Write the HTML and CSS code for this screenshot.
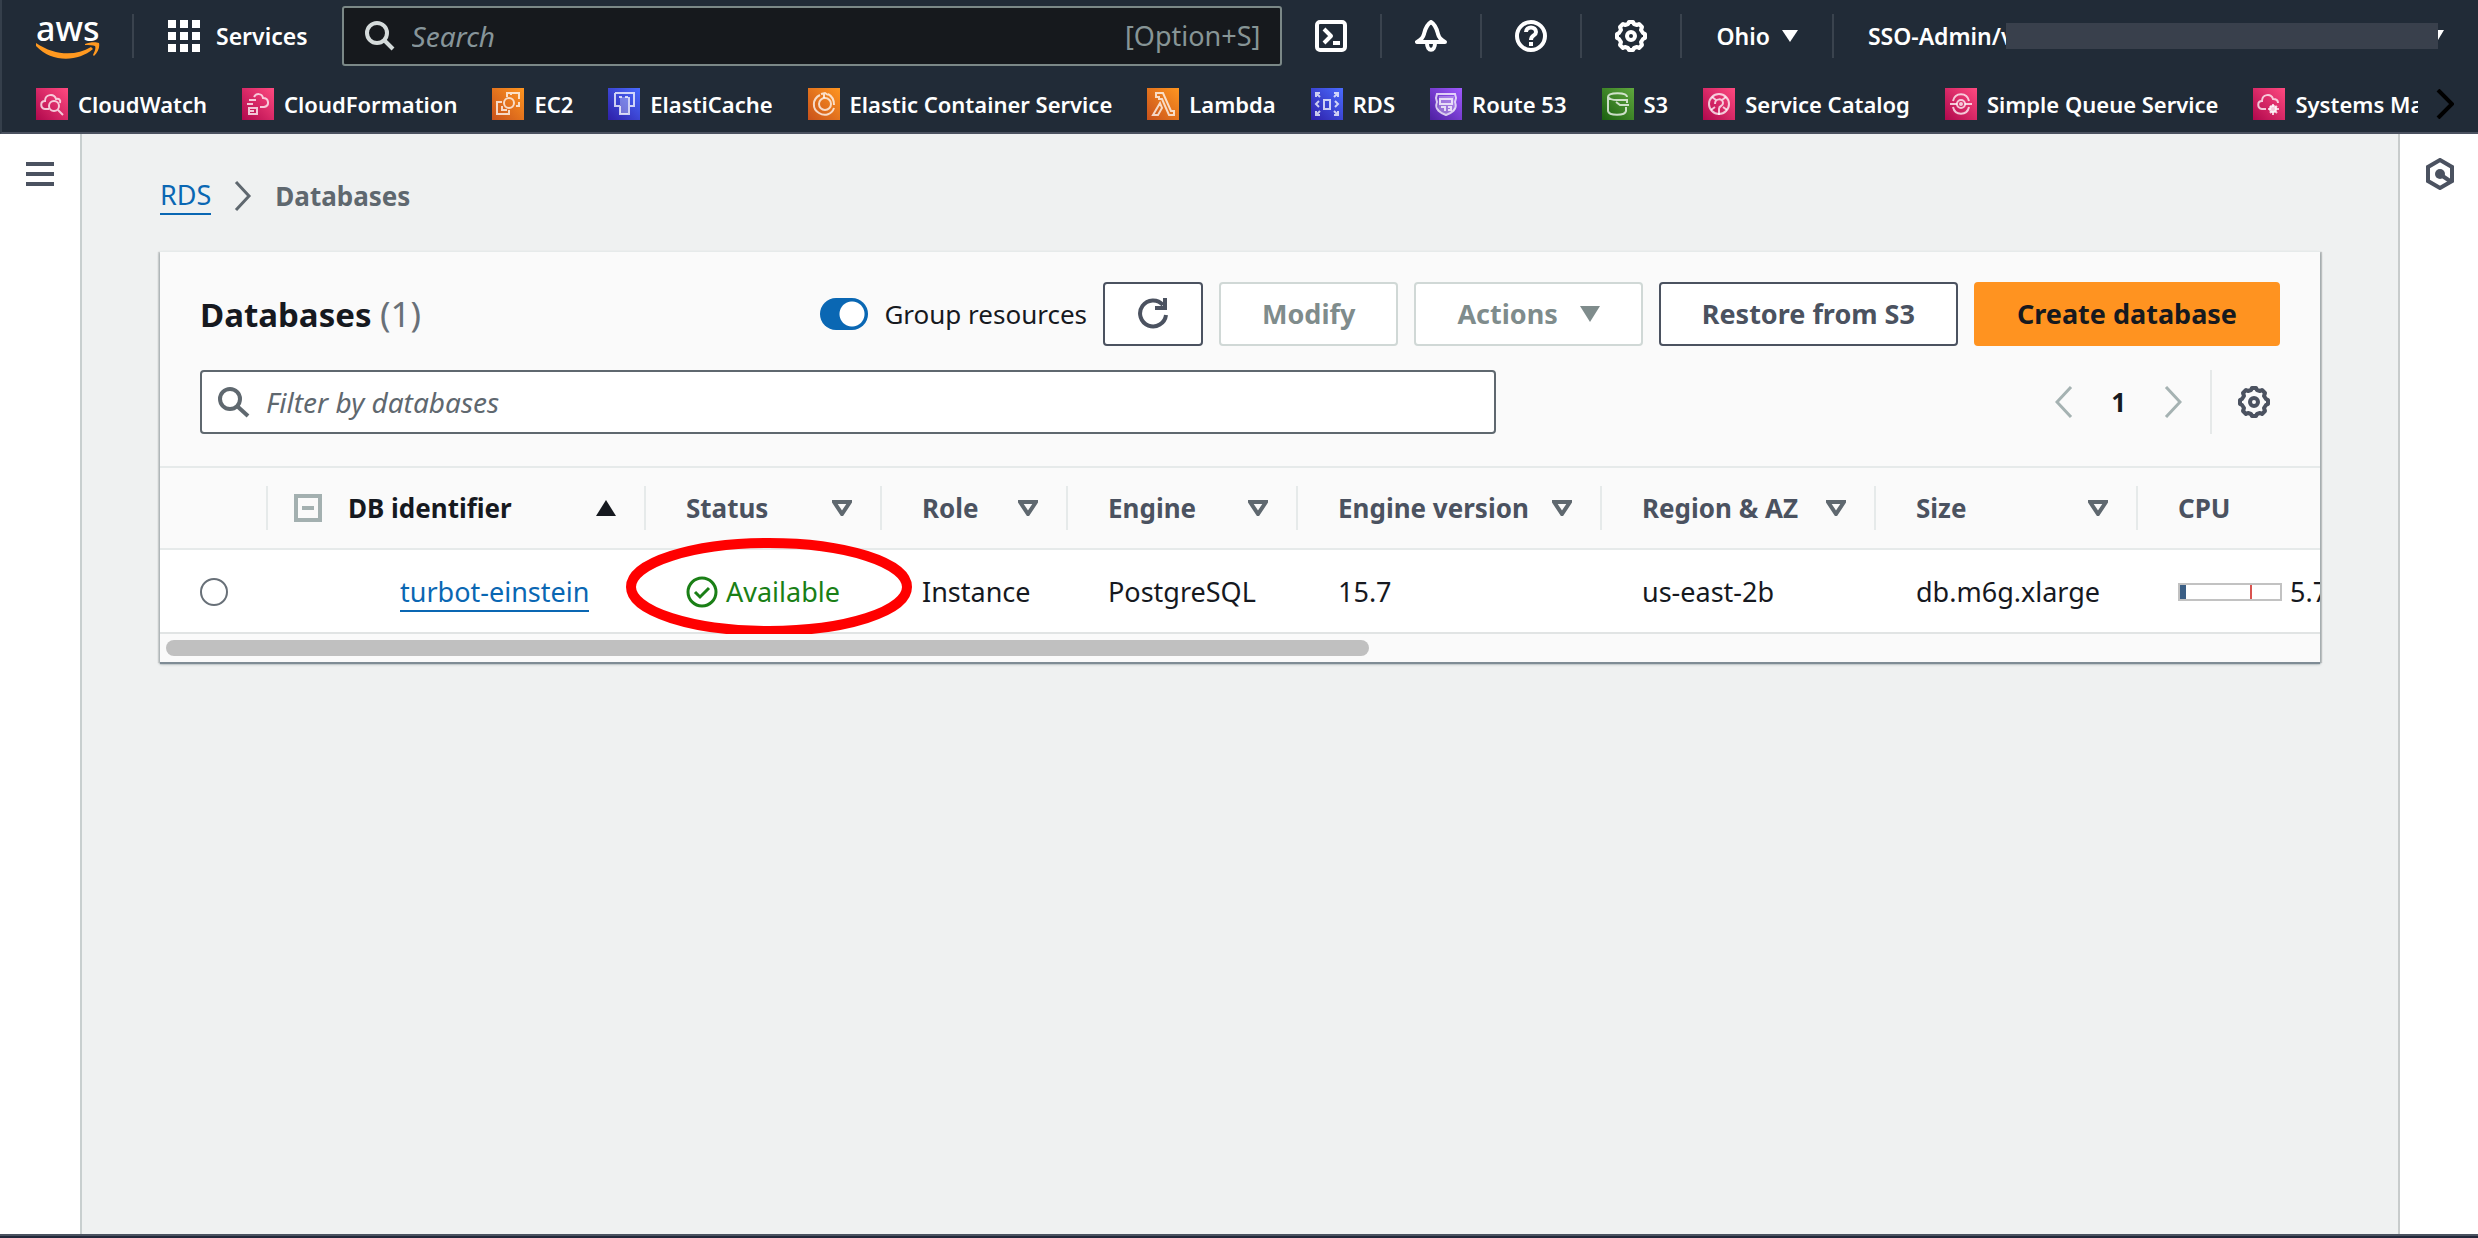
FILE: index.html
```html
<!DOCTYPE html>
<html lang="en">
<head>
<meta charset="utf-8">
<meta name="viewport" content="width=device-width, initial-scale=1">
<title>RDS Databases</title>
<link rel="stylesheet" href="styles.css">
</head>
<body>
<header class="topnav">
  <div class="topnav-main">
    <a class="logo" href="#" aria-label="AWS home">
      <span class="logo-word">aws</span>
      <svg class="logo-smile" viewBox="0 0 64 18" aria-hidden="true"><path d="M0 1c19 13 40 13 55 4l2 2C42 20 16 21 0 4zM49 2c5-2 11-2 14-1 1 4-1 9-5 13l-1-1c2-4 3-7 2-9-2-1-6-1-10-1z"/></svg>
    </a>
    <button class="nav-item services" type="button">
      <svg class="icon" viewBox="0 0 32 32" aria-hidden="true"><path fill="currentColor" d="M0 0h8v8H0zM12 0h8v8h-8zM24 0h8v8h-8zM0 12h8v8H0zM12 12h8v8h-8zM24 12h8v8h-8zM0 24h8v8H0zM12 24h8v8h-8zM24 24h8v8h-8z"/></svg>
      <span>Services</span>
    </button>
    <label class="search">
      <svg class="icon search-icon" viewBox="0 0 32 32" aria-hidden="true"><circle cx="13" cy="13" r="10"/><path d="M20 20l9 9"/></svg>
      <input type="search" placeholder="Search" aria-label="Search">
      <span class="search-hint">[Option+S]</span>
    </label>
    <div class="utilities">
      <button class="nav-item" type="button" aria-label="CloudShell"><svg class="icon line" viewBox="0 0 32 32"><rect x="2" y="2" width="28" height="28" rx="3"/><path d="M9 9l7 7-7 7"/><path d="M18 23h7"/></svg></button>
      <button class="nav-item" type="button" aria-label="Notifications"><svg class="icon line" viewBox="0 0 32 32"><path d="M16 2c-5 3-6 8-7 12-1 4-3 6-7 8h28c-4-2-6-4-7-8-1-4-2-9-7-12z"/><path d="M12 23c0 9 8 9 8 0"/></svg></button>
      <button class="nav-item" type="button" aria-label="Support"><svg class="icon line" viewBox="0 0 32 32"><circle cx="16" cy="16" r="14"/><path d="M11 12c0-6 10-6 10 0 0 4-5 3-5 8M16 22v4"/></svg></button>
      <button class="nav-item" type="button" aria-label="Settings"><svg class="icon line" viewBox="0 0 32 32"><path d="M13 4l1-2h4l1 2 3 1 2-1 3 3-1 3 2 3 2 1v4l-2 1-2 3 1 3-3 3-2-1-3 1-1 2h-4l-1-2-3-1-2 1-3-3 1-3-2-3-2-1v-4l2-1 2-3-1-3 3-3 2 1z"/><circle cx="16" cy="16" r="4"/></svg></button>
      <button class="nav-item region" type="button"><span>Ohio</span><svg class="caret" viewBox="0 0 16 12" aria-hidden="true"><path d="M0 0h16L8 12z"/></svg></button>
      <button class="nav-item account" type="button"><span>SSO-Admin/v</span><span class="redacted"></span><svg class="caret-tip" viewBox="0 0 6 12" aria-hidden="true"><path d="M0 0h6L0 10z"/></svg></button>
    </div>
  </div>
  <nav class="favorites" aria-label="Favorites">
    <ul class="favorites-list">
      <li><a href="#"><svg class="svc pink" viewBox="0 0 32 32"><path d="M13 21H9c-5-1-5-8 0-8 0-7 9-8 11-2 3-1 5 1 4 4"/><circle cx="18" cy="18" r="5"/><path d="M22 22l5 5"/></svg>CloudWatch</a></li>
      <li><a href="#"><svg class="svc pink" viewBox="0 0 32 32"><path d="M12 9c2-4 8-4 9 1 6 0 7 8 1 9h-4M7 12h7M5 16h6M7 20h8v6H7zM7 23h5"/></svg>CloudFormation</a></li>
      <li><a href="#"><svg class="svc orange" viewBox="0 0 32 32"><circle cx="17" cy="15" r="5"/><path d="M15 9V5h12v6M24 18h3v-4M10 14H5v12h12v-4M10 18v4h5M19 5v2"/></svg>EC2</a></li>
      <li><a href="#"><svg class="svc blue" viewBox="0 0 32 32"><path class="tint" d="M12 9h8v17h-8z"/><path d="M7 5h19v4M7 5v13h5M26 9v9h-5M12 18v8h9V9M11 9h3M17 9h3"/></svg>ElastiCache</a></li>
      <li><a href="#"><svg class="svc orange" viewBox="0 0 32 32"><circle cx="17" cy="16" r="6"/><path d="M12 7c-8 4-8 14-1 18 6 4 13 1 15-5M13 6l4-1 3 2M20 6c4 2 6 6 6 11M16 5v5"/></svg>Elastic Container Service</a></li>
      <li><a href="#"><svg class="svc orange" viewBox="0 0 32 32"><path d="M9 5h7l8 18h3v4h-5l-7-16h-3V9H9zM13 15l2 5-4 7H6z"/></svg>Lambda</a></li>
      <li><a href="#"><svg class="svc blue" viewBox="0 0 32 32"><path d="M5 9V5h4M5 5l4 4M27 9V5h-4M27 5l-4 4M5 23v4h4M5 27l4-4M27 23v4h-4M27 27l-4-4M13 12h6v9h-6zM8 13l-3 3 3 3M24 13l3 3-3 3M15 11v2"/></svg>RDS</a></li>
      <li><a href="#"><svg class="svc purple" viewBox="0 0 32 32"><path class="tint" d="M9 8h15l1 14-9 4-8-4z"/><path d="M7 6h18l1 4-1 4c3 8-4 11-9 13-5-2-12-5-9-13l-1-4zM10 11h12v5H10zM11 19h4v4M18 19h3v3h-3"/></svg>Route 53</a></li>
      <li><a href="#"><svg class="svc green" viewBox="0 0 32 32"><path d="M6 9c0-5 19-5 19 0M6 9v14c1 5 17 5 18 0v-4M6 9c2 3 6 3 9 3h10v3M14 14l4 3h9"/></svg>S3</a></li>
      <li><a href="#"><svg class="svc pink" viewBox="0 0 32 32"><circle cx="16" cy="16" r="10"/><path d="M12 16c0-6 8-6 8-1 0 4-4 2-4 6v6M9 9l4 3M23 9l-4 3M8 22l4-3M24 22l-4-3"/></svg>Service Catalog</a></li>
      <li><a href="#"><svg class="svc pink" viewBox="0 0 32 32"><path d="M8 13c2-9 14-9 16 0M8 19c2 9 14 9 16 0M5 16h7M20 16h7"/><circle cx="16" cy="16" r="4"/><circle cx="16" cy="16" r="1"/></svg>Simple Queue Service</a></li>
      <li><a href="#"><svg class="svc pink" viewBox="0 0 32 32"><path d="M13 21H9c-5-1-5-8 0-8 0-7 9-8 11-2 4 0 5 2 5 4M20 16v11M15 21h11M17 18l7 7M24 18l-7 7"/><circle cx="20" cy="21" r="3"/></svg>Systems Manager</a></li>
    </ul>
    <button class="favorites-next" type="button" aria-label="Next"><svg viewBox="0 0 18 30"><path d="M2 1l14 14L2 29"/></svg></button>
  </nav>
</header>

<div class="shell">
  <aside class="rail rail-left">
    <button type="button" aria-label="Open navigation"><svg class="burger" viewBox="0 0 28 24"><path d="M0 0h28v4H0zM0 10h28v4H0zM0 20h28v4H0z"/></svg></button>
  </aside>
  <main class="content">
    <nav class="breadcrumb" aria-label="Breadcrumb">
      <a class="link" href="#">RDS</a>
      <svg viewBox="0 0 18 32" aria-hidden="true"><path d="M2 2l13 14L2 30"/></svg>
      <span>Databases</span>
    </nav>
    <section class="card">
      <div class="card-head">
        <div class="title-row">
          <h1>Databases <span>(1)</span></h1>
          <div class="actions">
            <label class="switch"><input type="checkbox" checked>Group resources</label>
            <button class="btn btn-icon" type="button" aria-label="Refresh"><svg class="icon" viewBox="0 0 32 32"><path class="stroke" d="M26 7a13 13 0 1 0 3 10"/><path d="M30 0v12H18V8h8V0z"/></svg></button>
            <button class="btn" type="button" disabled>Modify</button>
            <button class="btn" type="button" disabled>Actions<svg class="btn-caret" viewBox="0 0 20 16" aria-hidden="true"><path d="M0 0h20L10 16z"/></svg></button>
            <button class="btn" type="button">Restore from S3</button>
            <button class="btn btn-primary" type="button">Create database</button>
          </div>
        </div>
        <div class="filter-row">
          <label class="filter">
            <svg class="icon" viewBox="0 0 32 32" aria-hidden="true"><circle cx="12" cy="13" r="10"/><path d="M19 20l11 10"/></svg>
            <input type="search" placeholder="Filter by databases" aria-label="Filter by databases">
          </label>
          <div class="pager">
            <button type="button" aria-label="Previous page" disabled><svg class="chev" viewBox="0 0 18 32"><path d="M16 1L2 16l14 15"/></svg></button>
            <span class="page">1</span>
            <button type="button" aria-label="Next page" disabled><svg class="chev" viewBox="0 0 18 32"><path d="M2 1l14 15L2 31"/></svg></button>
            <button class="prefs" type="button" aria-label="Preferences"><svg class="icon line" viewBox="0 0 32 32"><path d="M13 4l1-2h4l1 2 3 1 2-1 3 3-1 3 2 3 2 1v4l-2 1-2 3 1 3-3 3-2-1-3 1-1 2h-4l-1-2-3-1-2 1-3-3 1-3-2-3-2-1v-4l2-1 2-3-1-3 3-3 2 1z"/><circle cx="16" cy="16" r="4"/></svg></button>
          </div>
        </div>
      </div>
      <div class="table-wrap">
        <table>
          <colgroup><col class="c-select"><col class="c-id"><col class="c-status"><col class="c-role"><col class="c-engine"><col class="c-version"><col class="c-region"><col class="c-size"><col></colgroup>
          <thead>
            <tr>
              <th scope="col" aria-label="Select"><div class="th"></div></th>
              <th scope="col" class="sorted"><div class="th th-id"><svg class="collapse" viewBox="0 0 28 28" aria-hidden="true"><path d="M2 2h24v24H2zM8 14h12"/></svg>DB identifier<svg class="sort" viewBox="0 0 20 16" aria-hidden="true"><path d="M10 0l10 16H0z"/></svg></div></th>
              <th scope="col"><div class="th">Status<svg class="sort open" viewBox="0 0 20 16" aria-hidden="true"><path d="M2 2h16l-8 12z"/></svg></div></th>
              <th scope="col"><div class="th">Role<svg class="sort open" viewBox="0 0 20 16" aria-hidden="true"><path d="M2 2h16l-8 12z"/></svg></div></th>
              <th scope="col"><div class="th">Engine<svg class="sort open" viewBox="0 0 20 16" aria-hidden="true"><path d="M2 2h16l-8 12z"/></svg></div></th>
              <th scope="col"><div class="th">Engine version<svg class="sort open" viewBox="0 0 20 16" aria-hidden="true"><path d="M2 2h16l-8 12z"/></svg></div></th>
              <th scope="col"><div class="th">Region &amp; AZ<svg class="sort open" viewBox="0 0 20 16" aria-hidden="true"><path d="M2 2h16l-8 12z"/></svg></div></th>
              <th scope="col"><div class="th">Size<svg class="sort open" viewBox="0 0 20 16" aria-hidden="true"><path d="M2 2h16l-8 12z"/></svg></div></th>
              <th scope="col"><div class="th th-last">CPU</div></th>
            </tr>
          </thead>
          <tbody>
            <tr>
              <td class="select"><input type="radio" name="db" aria-label="Select turbot-einstein"></td>
              <td class="identifier"><a class="link" href="#">turbot-einstein</a></td>
              <td class="status">
                <span class="ok"><svg class="icon" viewBox="0 0 32 32" aria-hidden="true"><circle cx="16" cy="16" r="14"/><path d="M9 16l5 5 9-9"/></svg>Available</span>
                <svg class="highlight" viewBox="0 0 286 96" aria-hidden="true"><ellipse cx="143" cy="49" rx="138" ry="44"/></svg>
              </td>
              <td>Instance</td>
              <td>PostgreSQL</td>
              <td>15.7</td>
              <td>us-east-2b</td>
              <td>db.m6g.xlarge</td>
              <td><div class="cpu"><span class="meter"><span class="meter-fill" style="width: 6%"></span><span class="meter-mark"></span></span>5.7</div></td>
            </tr>
          </tbody>
        </table>
      </div>
      <div class="scrollbar"><div class="thumb"></div></div>
    </section>
  </main>
  <aside class="rail rail-right">
    <button type="button" aria-label="Open tools"><svg class="hex" viewBox="0 0 28 32"><path class="stroke" d="M14 2l12 7v14l-12 7-12-7V9z"/><circle cx="14" cy="16" r="5"/><path class="stroke" d="M15 17l9 6"/></svg></button>
  </aside>
</div>
<footer class="footer"></footer>
</body>
</html>
```
FILE: styles.css
```css
* { box-sizing: border-box; }

body {
  margin: 0;
  height: 100vh;
  display: flex;
  flex-direction: column;
  overflow: hidden;
  background: #eff1f1;
  color: #16191f;
  font: 27px/40px "Noto Sans", sans-serif;
}

button {
  margin: 0;
  padding: 0;
  border: 0;
  background: none;
  color: inherit;
  font: inherit;
}

input { font: inherit; color: inherit; }
svg { display: block; flex: none; fill: none; }
.icon { width: 32px; height: 32px; }
.line { stroke: currentColor; stroke-width: 4; stroke-linejoin: round; }

/* Top navigation */
.topnav {
  flex: none;
  background: #212b37;
  border-bottom: 2px solid #4b5260;
  border-left: 2px solid #353f4b;
  color: #fff;
  font-size: 22px;
  font-weight: 600;
  line-height: 32px;
}

.topnav-main { display: flex; align-items: center; height: 72px; font-size: 23px; }

.logo {
  display: flex;
  flex-direction: column;
  width: 132px;
  height: 44px;
  padding-left: 34px;
  border-right: 2px solid #3a434e;
  color: #fff;
  text-decoration: none;
}

.logo-word { font: 500 34px/28px "Noto Sans", sans-serif; }
.logo-smile { width: 64px; height: 18px; fill: #ff9920; }

.nav-item { display: flex; align-items: center; }
.services { gap: 16px; padding: 0 34px; }

.search {
  display: flex;
  flex: none;
  align-items: center;
  width: 38%;
  height: 60px;
  padding: 0 20px 0 20px;
  background: #16191d;
  border: 2px solid #7b8887;
  border-radius: 3px;
  color: #879596;
  font-size: 27px;
  font-weight: 400;
}

.search-icon { stroke: #d5dbdb; stroke-width: 4; }

.search input {
  flex: 1;
  min-width: 0;
  margin-left: 16px;
  padding: 2px 0 0;
  border: 0;
  outline: 0;
  background: none;
}

.search input::placeholder, .filter input::placeholder {
  color: #87959a;
  font-style: italic;
  font-size: 28px;
  opacity: 1;
}

.utilities { display: flex; align-items: center; flex: 1; }

.utilities .nav-item {
  height: 44px;
  padding: 0 33px;
  border-right: 2px solid #3a434e;
}

.utilities .region { gap: 12px; padding: 0 34px; }
.utilities .account { flex: 1; min-width: 0; padding: 0 34px 0 34px; border: 0; }
.caret { width: 16px; height: 12px; fill: #fff; }
.caret-tip { width: 6px; height: 12px; fill: #fff; }
.redacted { flex: 1; height: 26px; margin-left: -8px; background: #39404c; }

.favorites { display: flex; align-items: center; height: 60px; padding: 4px 24px 0 34px; }

.favorites-list {
  display: flex;
  flex: 1;
  gap: 35px;
  min-width: 0;
  margin: 0;
  padding: 0;
  overflow: hidden;
  list-style: none;
  white-space: nowrap;
}

.favorites-list a {
  display: flex;
  align-items: center;
  gap: 10px;
  color: #fff;
  text-decoration: none;
}

.svc { width: 32px; height: 32px; stroke: #fff; stroke-opacity: 0.75; stroke-width: 2; }
.tint { fill: #fff; fill-opacity: 0.3; stroke: none; }
.pink { background: linear-gradient(45deg, #b0084d, #ff4a80); }
.orange { background: linear-gradient(45deg, #c8511b, #ff9620); }
.blue { background: linear-gradient(45deg, #2e1fa8, #4a6cff); }
.purple { background: linear-gradient(45deg, #4d1fa0, #a05aff); }
.green { background: linear-gradient(45deg, #1b6010, #60a83e); }

.favorites-next { margin-left: 18px; }
.favorites-next svg { width: 18px; height: 30px; stroke: #000; stroke-width: 4; }

/* Page frame */
.shell { display: flex; flex: 1; min-height: 0; }

.rail {
  flex: none;
  display: flex;
  justify-content: center;
  align-items: flex-start;
  width: 82px;
  background: #fff;
  color: #4b5260;
}

.rail-left { padding-top: 28px; border-right: 2px solid #c8cfcf; }
.rail-right { width: 80px; padding: 24px 0 0 2px; border-left: 2px solid #c8cccc; }
.burger { width: 28px; height: 24px; fill: currentColor; }
.hex { width: 28px; height: 32px; fill: currentColor; }
.stroke { fill: none; stroke: currentColor; stroke-width: 4; }

.content { flex: 1; min-width: 0; padding: 42px 78px; }

.breadcrumb {
  display: flex;
  align-items: center;
  gap: 23px;
  height: 40px;
  margin-bottom: 35px;
  color: #5f686f;
  font-size: 26px;
  font-weight: 700;
}

.breadcrumb a { font-weight: 400; font-size: 27px; line-height: 36px; }
.breadcrumb svg { width: 18px; height: 32px; stroke: #5f686f; stroke-width: 3; }
.link { color: #0a67b3; text-decoration: none; border-bottom: 2px solid #0a67b3; }

/* Databases card */
.card {
  background: #fafafa;
  border-top: 1px solid #e6eaea;
  box-shadow: 0 2px 1px #7f8c95, 0 2px 3px rgba(0, 28, 36, 0.3), 2px 1px 1px #c6c9c9, -2px 1px 1px #d3d6d6;
}

.card-head { padding: 30px 40px 32px; border-bottom: 2px solid #e6eaea; }
.title-row { display: flex; align-items: center; justify-content: space-between; height: 64px; }
h1 { margin: 0; font-size: 33px; font-weight: 700; line-height: 44px; }
h1 span { color: #687078; font-weight: 400; font-size: 35px; }
.actions { display: flex; align-items: center; gap: 16px; }

.switch { display: flex; align-items: center; gap: 16px; font-size: 26px; }

.switch input {
  appearance: none;
  width: 48px;
  height: 32px;
  margin: 0;
  border-radius: 16px;
  background: radial-gradient(circle at 32px 16px, #fff 12px, #0a67b3 13px);
}

.btn {
  display: flex;
  align-items: center;
  gap: 22px;
  height: 64px;
  padding: 0 41px;
  background: #fff;
  border: 2px solid #4b5260;
  border-radius: 4px;
  color: #4b5260;
  font-size: 27px;
  font-weight: 700;
}

.btn:disabled { border-color: #d0d8d6; color: #7f8c8c; }
.btn-icon { padding: 0 32px; }
.btn-icon .icon { fill: currentColor; }
.btn-icon .stroke { fill: none; }
.btn-caret { width: 20px; height: 16px; fill: currentColor; }
.btn-primary { border-color: #ff9320; background: #ff9320; color: #16191f; }

.filter-row { display: flex; justify-content: space-between; gap: 40px; margin-top: 24px; }

.filter {
  display: flex;
  align-items: center;
  width: 100%;
  max-width: 1296px;
  height: 64px;
  padding: 0 16px;
  background: #fff;
  border: 2px solid #5f686f;
  border-radius: 4px;
}

.filter .icon { stroke: #5f686f; stroke-width: 4; }
.filter input { flex: 1; min-width: 0; margin-left: 16px; padding: 2px 0 0; border: 0; outline: 0; background: none; }
.filter input::placeholder { color: #5f686f; }

.pager { display: flex; flex: none; align-items: center; gap: 38px; font-size: 26px; font-weight: 700; }
.chev { width: 18px; height: 32px; stroke: #a5b2b2; stroke-width: 3; }
.pager .prefs {
  display: flex;
  align-items: center;
  height: 64px;
  margin-left: -10px;
  padding: 0 10px 0 26px;
  border-left: 2px solid #e6e9e9;
  color: #4b5260;
}

/* Table */
.table-wrap { overflow: hidden; }
table { width: 100%; border-collapse: collapse; table-layout: fixed; white-space: nowrap; }
.c-select { width: 108px; }
.c-id { width: 378px; }
.c-status { width: 236px; }
.c-role { width: 186px; }
.c-engine { width: 230px; }
.c-version { width: 304px; }
.c-region { width: 274px; }
.c-size { width: 262px; }

th { padding: 18px 0; border-bottom: 2px solid #e6eaea; color: #4b5260; font-size: 26px; text-align: left; }
.th {
  display: flex;
  align-items: center;
  height: 44px;
  padding: 0 28px 0 40px;
  border-right: 2px solid #e6eaea;
}
.th-last { border: 0; }
.th-id { padding-left: 26px; }
.sorted { color: #16191f; }
.collapse { width: 28px; height: 28px; margin-right: 26px; stroke: #a3b0b0; stroke-width: 4; }
.sort { width: 20px; height: 16px; margin-left: auto; fill: currentColor; }
.sort.open { fill: none; stroke: #5f686f; stroke-width: 4; }

td { height: 84px; padding: 2px 0 0 40px; background: #fff; border-bottom: 2px solid #e1e4e4; }
td.identifier { padding-left: 132px; }
td.status { position: relative; }

.select input {
  appearance: none;
  display: block;
  width: 28px;
  height: 28px;
  margin: 0;
  border: 2px solid #687078;
  border-radius: 50%;
}

.ok { display: flex; align-items: center; gap: 8px; color: #1a7f16; }
.ok svg { stroke: currentColor; stroke-width: 3; }

/* Ellipse drawn around the status cell */
.highlight {
  position: absolute;
  left: -20px;
  top: -12px;
  width: 286px;
  height: 96px;
  stroke: #ff0000;
  stroke-width: 10;
  z-index: 1;
}

.cpu { display: flex; align-items: center; gap: 8px; }
.meter { display: flex; flex: none; width: 104px; height: 18px; border: 2px solid #c2c2c2; }
.meter-fill { background: #3b5f85; }
.meter-mark { width: 2px; margin-left: 64px; background: #d9534f; }

.scrollbar { padding: 6px; }
.thumb { width: 56%; height: 16px; border-radius: 8px; background: #c0c0c0; }

.footer { flex: none; height: 4px; background: #22283a; border-top: 2px solid #4b5260; }
```
